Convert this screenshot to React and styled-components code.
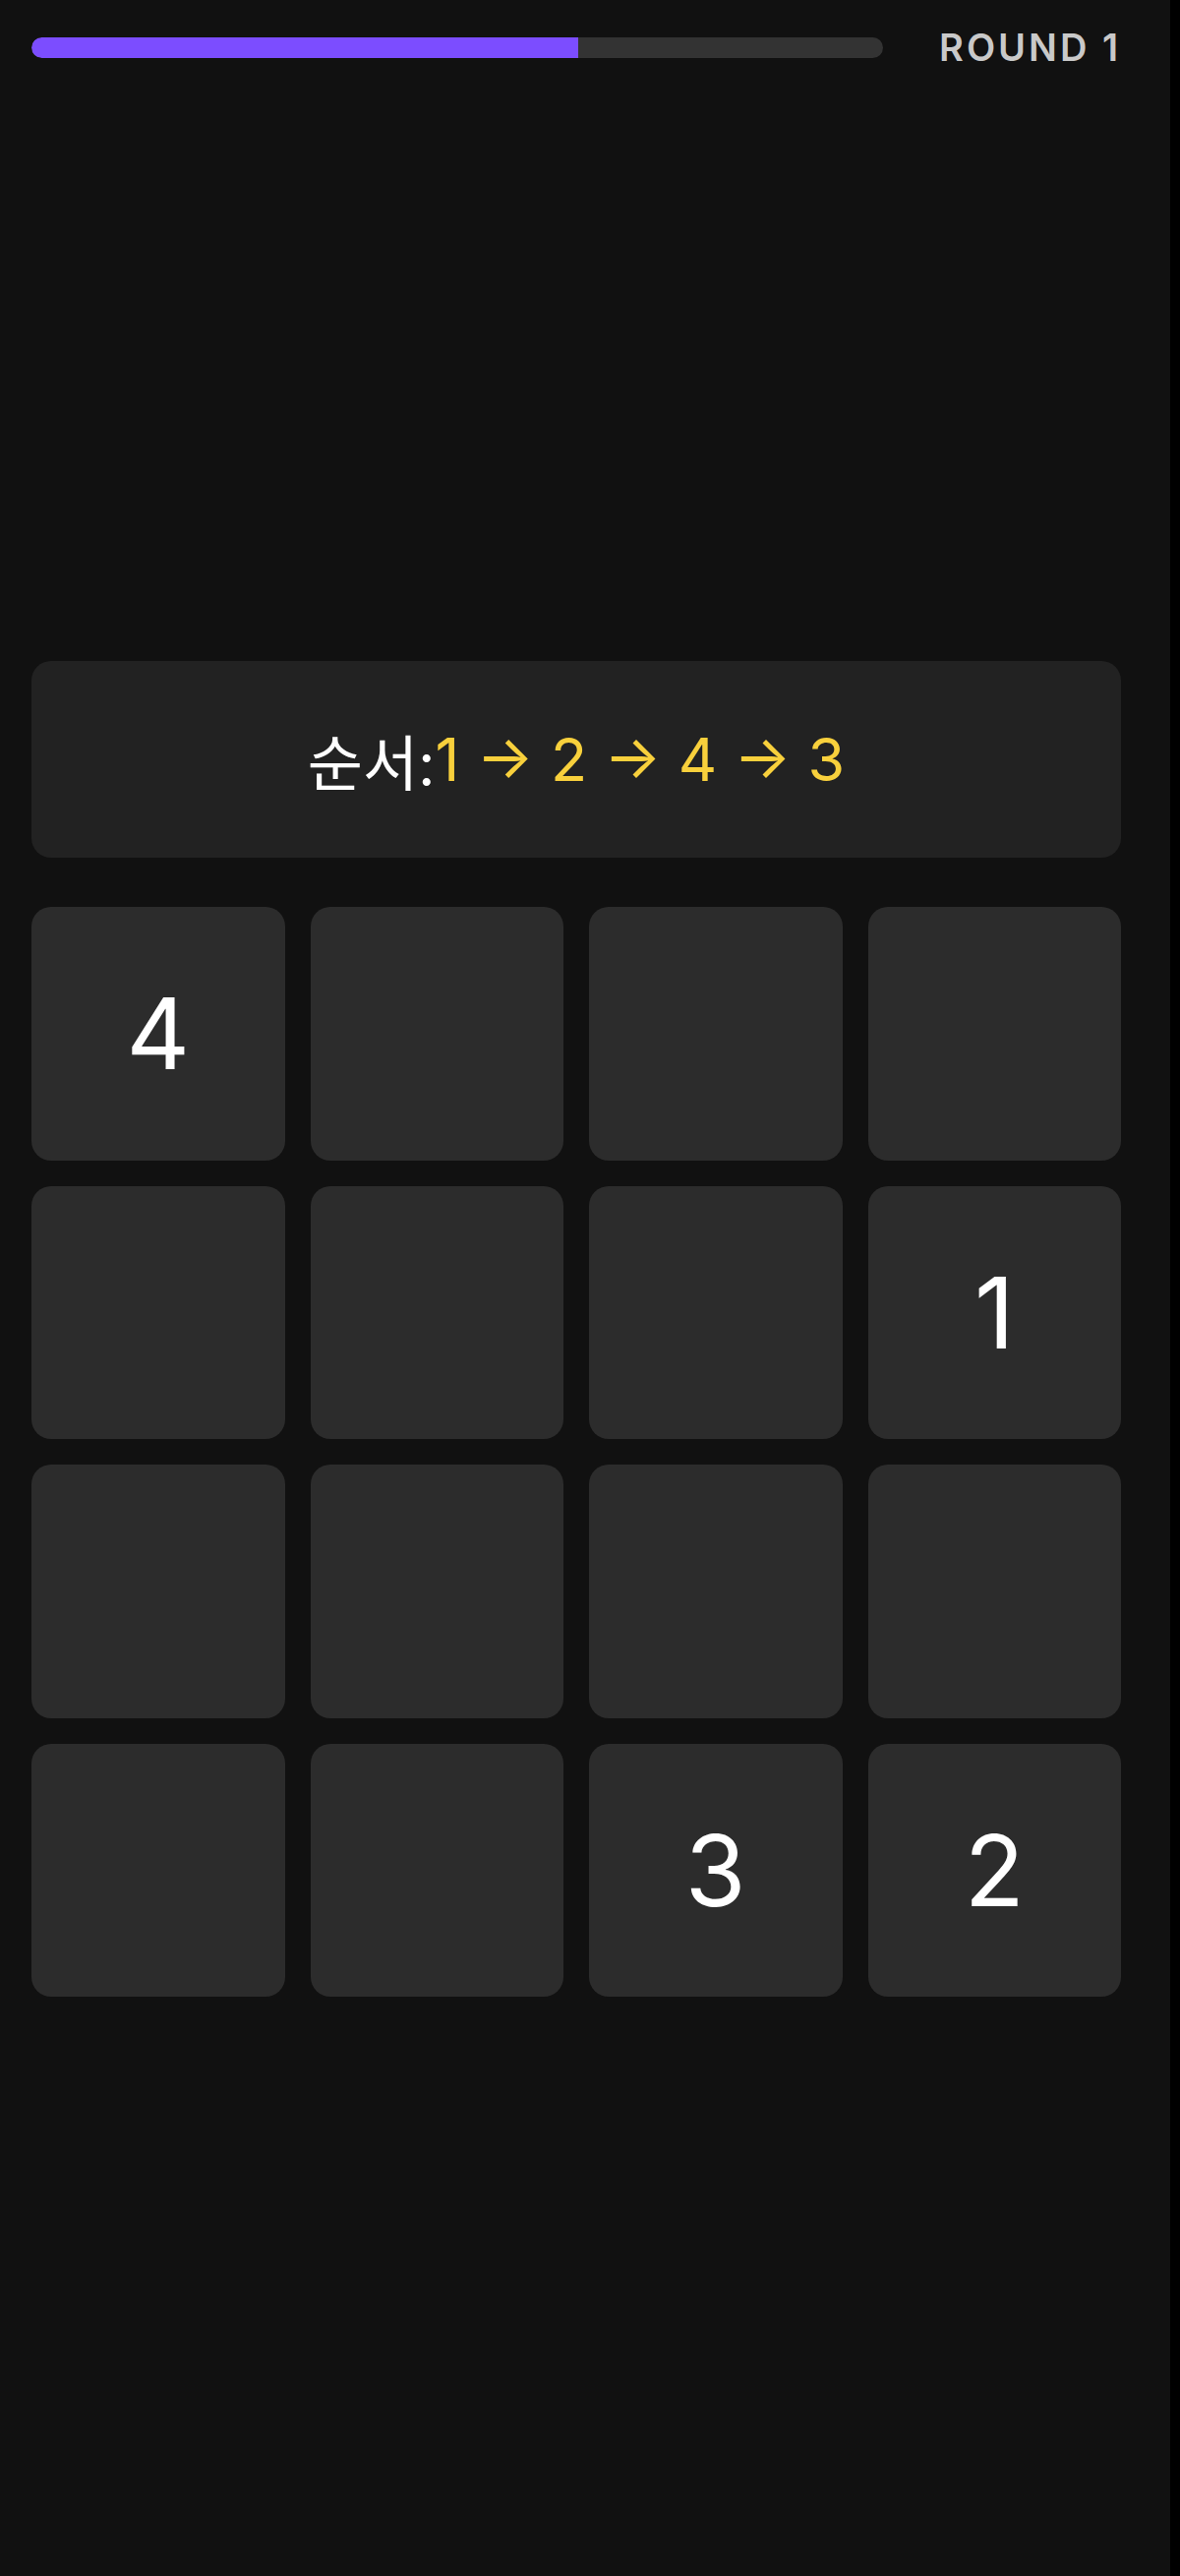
import React from 'react';
import styled, { createGlobalStyle } from 'styled-components';

const GlobalStyle = createGlobalStyle`
    html, body {
        margin: 0;
        padding: 0;
        background: #000;
    }
    body {
        font-family: Inter, 'Noto Sans CJK KR', 'Noto Sans', sans-serif;
    }
`;

const Page = styled.div`
    width: 1190px;
    min-height: 100vh;
    background: #111111;
    box-sizing: border-box;
    padding: 24px 32px 0 32px;
`;

const Content = styled.div`
    width: 1108px;
    display: flex;
    flex-direction: column;
`;

const Header = styled.div`
    height: 48px;
    display: flex;
    align-items: center;
    gap: 57px;
`;

const Track = styled.div`
    flex: 1;
    height: 21px;
    border-radius: 11px;
    background: #333333;
    overflow: hidden;
`;

const Fill = styled.div`
    height: 100%;
    background: #7c4dff;
    border-radius: 11px 0 0 11px;
`;

const RoundLabel = styled.div`
    font-family: Inter, sans-serif;
    font-size: 38px;
    font-weight: 600;
    letter-spacing: 3px;
    color: #c9c9c9;
    text-transform: uppercase;
`;

const Stage = styled.div`
    height: 600px;
`;

const OrderCard = styled.div`
    height: 200px;
    border-radius: 20px;
    background: #222222;
    display: flex;
    align-items: center;
    justify-content: center;
    font-size: 61px;
    color: #ffffff;
`;

const Sequence = styled.span`
    color: #f8d03c;
`;

const Board = styled.div`
    margin-top: 50px;
    display: grid;
    grid-template-columns: repeat(4, 1fr);
    gap: 26px;
`;

const Cell = styled.div`
    aspect-ratio: 1;
    border-radius: 20px;
    background: #2c2c2c;
    display: flex;
    align-items: center;
    justify-content: center;
    font-family: Inter, sans-serif;
    font-size: 100px;
    font-weight: 400;
    color: #ffffff;
`;

const cells = [4, null, null, null, null, null, null, 1, null, null, null, null, null, null, 3, 2];
const order = [1, 2, 4, 3];
const progress = 64.2;

export default function App() {
    return (
        <>
            <GlobalStyle />
            <Page>
                <Content>
                    <Header>
                        <Track>
                            <Fill style={{ width: `${progress}%` }} />
                        </Track>
                        <RoundLabel>Round 1</RoundLabel>
                    </Header>
                    <Stage />
                    <OrderCard>
                        순서:<Sequence>{order.join(' → ')}</Sequence>
                    </OrderCard>
                    <Board>
                        {cells.map((n, i) => (
                            <Cell key={i}>{n}</Cell>
                        ))}
                    </Board>
                </Content>
            </Page>
        </>
    );
}
